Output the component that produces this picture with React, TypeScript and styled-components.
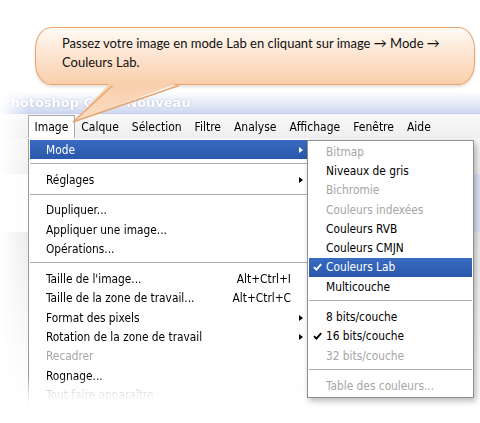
import styled, { createGlobalStyle } from "styled-components";

const GlobalStyle = createGlobalStyle`
  html, body {
    margin: 0;
    padding: 0;
    background: #fff;
  }
  body {
    width: 480px;
    height: 423px;
    overflow: hidden;
  }
`;

const Page = styled.div`
  position: relative;
  box-sizing: border-box;
  width: 480px;
  height: 423px;
  padding-top: 27px;
  overflow: hidden;
  background: #fff;
`;

const Callout = styled.div`
  position: relative;
  z-index: 3;
  box-sizing: border-box;
  width: 440px;
  height: 58px;
  margin-left: 35px;
  padding: 6px 0 0 26px;
  border: 1.5px solid #e8a46e;
  border-radius: 16px / 22px;
  background: linear-gradient(to bottom, #fffaf6 0%, #fde6d3 45%, #f9cfab 100%);
  box-shadow: 0 2px 3px rgba(120, 80, 40, 0.18);
  font-family: Lato, "Noto Sans", sans-serif;
  font-size: 13px;
  line-height: 19px;
  color: #111;
`;

const Tail = styled.svg`
  position: absolute;
  left: 30px;
  top: calc(100% - 2px);
  overflow: visible;
`;

const Window = styled.div`
  position: relative;
  margin-top: 7px;
  height: 320px;
`;

const Backdrop = styled.div`
  -webkit-mask-image: linear-gradient(to right, transparent 0, #000 28px);
  mask-image: linear-gradient(to right, transparent 0, #000 28px);
`;

const TitleBar = styled.div`
  height: 21px;
  display: flex;
  align-items: center;
  background: linear-gradient(to bottom, #fcfdfe 0%, #e6ebf8 55%, #cdd7f1 100%);
  font-family: "DejaVu Sans", sans-serif;
  font-weight: bold;
  font-size: 13px;
  color: #fff;
  text-shadow: 0 0 2px rgba(110, 120, 150, 0.45);
  overflow: hidden;
  white-space: nowrap;
`;

const TitleText = styled.span`
  padding-left: 1px;
`;

const MenuBar = styled.div`
  height: 25px;
  box-sizing: border-box;
  display: flex;
  align-items: stretch;
  padding: 1px 0 0 28px;
  border-top: 1px solid #c6d0ea;
  background: linear-gradient(to bottom, #f8f8f8, #efefef);
  font-family: "DejaVu Sans Condensed", "DejaVu Sans", sans-serif;
  font-stretch: condensed;
  font-size: 12px;
  color: #000;
`;

const MenuTitle = styled.div<{ $open?: boolean }>`
  display: flex;
  align-items: center;
  padding: 0 5.5px 1px;
  border: 1px solid ${(p) => (p.$open ? "#a9a9a9" : "transparent")};
  border-bottom: 0;
  background: ${(p) => (p.$open ? "#fff" : "transparent")};
`;

const Body = styled.div`
  height: 262px;
  display: flex;
  flex-direction: column;
`;

const Strip = styled.div<{ $h?: number; $bg: string }>`
  height: ${(p) => (p.$h ? `${p.$h}px` : "auto")};
  flex: ${(p) => (p.$h ? "none" : "1")};
  background: ${(p) => p.$bg};
`;

const MainMenu = styled.div`
  position: absolute;
  left: 28px;
  top: 47px;
  width: 280px;
  box-sizing: border-box;
  padding: 1px;
  border-left: 1px solid #9a9a9a;
  background: #fff;
  box-shadow: -1px 0 3px rgba(0, 0, 0, 0.18);
  font-family: "DejaVu Sans Condensed", "DejaVu Sans", sans-serif;
  font-stretch: condensed;
  font-size: 11.8px;
  -webkit-mask-image: linear-gradient(to bottom, #000 0, #000 89%, rgba(0, 0, 0, 0.2) 96%, transparent 100%);
  mask-image: linear-gradient(to bottom, #000 0, #000 89%, rgba(0, 0, 0, 0.2) 96%, transparent 100%);
`;

const Row = styled.div<{ $active?: boolean; $disabled?: boolean }>`
  display: grid;
  grid-template-columns: 1fr auto 16px;
  align-items: center;
  height: 19.3px;
  padding-left: 16px;
  white-space: nowrap;
  color: ${(p) => (p.$active ? "#fff" : p.$disabled ? "#a6a6a6" : "#000")};
  background: ${(p) =>
    p.$active ? "linear-gradient(to bottom, #386bc2, #2a58aa)" : "transparent"};
`;

const Shortcut = styled.span`
  text-align: right;
`;

const Arrow = styled.span<{ $light?: boolean }>`
  width: 0;
  height: 0;
  margin-left: 8px;
  border-left: 4px solid ${(p) => (p.$light ? "#fff" : "#000")};
  border-top: 3.5px solid transparent;
  border-bottom: 3.5px solid transparent;
`;

const Separator = styled.div`
  height: 1px;
  margin: 4px 0 6px;
  background: #adadad;
`;

const SubMenu = styled.div`
  position: absolute;
  left: 307px;
  top: 48px;
  width: 167px;
  box-sizing: border-box;
  padding: 1px;
  border: 1px solid #8f8f8f;
  background: #fff;
  box-shadow: 2px 3px 6px rgba(0, 0, 0, 0.28);
  font-family: "DejaVu Sans Condensed", "DejaVu Sans", sans-serif;
  font-stretch: condensed;
  font-size: 11.8px;
`;

const SubRow = styled.div<{ $active?: boolean; $disabled?: boolean }>`
  display: grid;
  grid-template-columns: 17px 1fr;
  align-items: center;
  height: 19.3px;
  white-space: nowrap;
  color: ${(p) => (p.$active ? "#fff" : p.$disabled ? "#a6a6a6" : "#000")};
  background: ${(p) =>
    p.$active ? "linear-gradient(to bottom, #386bc2, #2a58aa)" : "transparent"};
`;

const CheckBox = styled.span`
  display: flex;
  align-items: center;
  padding-left: 4px;
`;

function Check() {
  return (
    <svg width="9" height="8" viewBox="0 0 9 8">
      <path d="M1 4.2 L3.4 6.6 L8.2 1.2" fill="none" stroke="currentColor" strokeWidth="1.9" />
    </svg>
  );
}

type MainItem =
  | { sep: true }
  | { label: string; shortcut?: string; arrow?: boolean; disabled?: boolean; active?: boolean };

const mainItems: MainItem[] = [
  { label: "Mode", arrow: true, active: true },
  { sep: true },
  { label: "Réglages", arrow: true },
  { sep: true },
  { label: "Dupliquer..." },
  { label: "Appliquer une image..." },
  { label: "Opérations..." },
  { sep: true },
  { label: "Taille de l'image...", shortcut: "Alt+Ctrl+I" },
  { label: "Taille de la zone de travail...", shortcut: "Alt+Ctrl+C" },
  { label: "Format des pixels", arrow: true },
  { label: "Rotation de la zone de travail", arrow: true },
  { label: "Recadrer", disabled: true },
  { label: "Rognage..." },
  { label: "Tout faire apparaître", disabled: true },
];

type SubItem =
  | { sep: true }
  | { label: string; checked?: boolean; disabled?: boolean; active?: boolean };

const subItems: SubItem[] = [
  { label: "Bitmap", disabled: true },
  { label: "Niveaux de gris" },
  { label: "Bichromie", disabled: true },
  { label: "Couleurs indexées", disabled: true },
  { label: "Couleurs RVB" },
  { label: "Couleurs CMJN" },
  { label: "Couleurs Lab", checked: true, active: true },
  { label: "Multicouche" },
  { sep: true },
  { label: "8 bits/couche" },
  { label: "16 bits/couche", checked: true },
  { label: "32 bits/couche", disabled: true },
  { sep: true },
  { label: "Table des couleurs...", disabled: true },
];

const menuTitles = ["Image", "Calque", "Sélection", "Filtre", "Analyse", "Affichage", "Fenêtre", "Aide"];

export default function App() {
  return (
    <>
      <GlobalStyle />
      <Page>
        <Callout>
          Passez votre image en mode Lab en cliquant sur image → Mode →
          <br />
          Couleurs Lab.
          <Tail width="120" height="45" viewBox="0 0 120 45">
            <defs>
              <linearGradient id="tailFill" x1="0" y1="0" x2="0" y2="1">
                <stop offset="0" stopColor="#f9cfab" />
                <stop offset="1" stopColor="#fbdcc2" />
              </linearGradient>
            </defs>
            <polygon points="45,0 115,0 7,40" fill="url(#tailFill)" />
            <path d="M46.5 3.5 L7 40 L113 3.5" fill="none" stroke="#e8a46e" strokeWidth="1.4" />
          </Tail>
        </Callout>

        <Window>
          <Backdrop>
            <TitleBar>
              <TitleText>Photoshop CS4 - Nouveau</TitleText>
            </TitleBar>
            <MenuBar>
              {menuTitles.map((t, i) => (
                <MenuTitle key={t} $open={i === 0}>
                  {t}
                </MenuTitle>
              ))}
            </MenuBar>
            <Body>
              <Strip $h={36} $bg="linear-gradient(to bottom, #f6f6f6, #efefef)" />
              <Strip $h={58} $bg="linear-gradient(to right, #ffffff, #dbe3f4)" />
              <Strip $bg="linear-gradient(to bottom, #ececec, #ffffff)" />
            </Body>
          </Backdrop>

          <MainMenu>
            {mainItems.map((item, i) =>
              "sep" in item ? (
                <Separator key={i} />
              ) : (
                <Row key={i} $active={item.active} $disabled={item.disabled}>
                  <span>{item.label}</span>
                  <Shortcut>{item.shortcut ?? ""}</Shortcut>
                  {item.arrow ? <Arrow $light={item.active} /> : <span />}
                </Row>
              )
            )}
          </MainMenu>

          <SubMenu>
            {subItems.map((item, i) =>
              "sep" in item ? (
                <Separator key={i} />
              ) : (
                <SubRow key={i} $active={item.active} $disabled={item.disabled}>
                  <CheckBox>{item.checked ? <Check /> : null}</CheckBox>
                  <span>{item.label}</span>
                </SubRow>
              )
            )}
          </SubMenu>
        </Window>
      </Page>
    </>
  );
}
